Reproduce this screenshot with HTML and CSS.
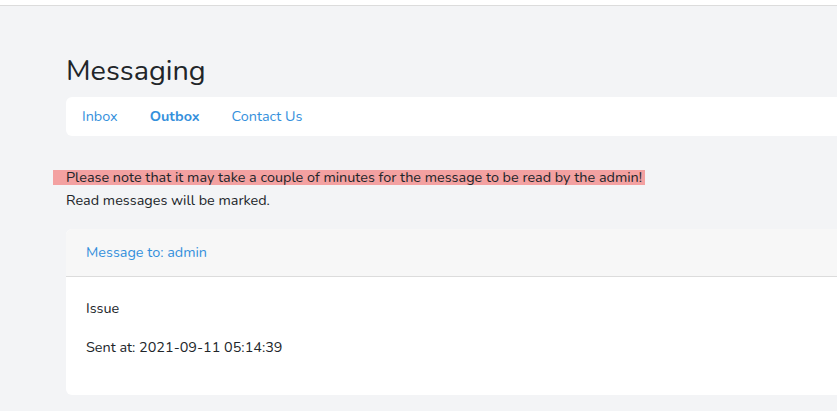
FILE: index.html
```html
<!DOCTYPE html>
<html>
<head>
<meta charset="utf-8">
<link rel="stylesheet" href="styles.css">
</head>
<body>
<div class="topbar"></div>
<main class="container">
  <h2 class="title">Messaging</h2>
  <nav class="tabs">
    <a class="tab" href="#">Inbox</a>
    <a class="tab active" href="#">Outbox</a>
    <a class="tab" href="#">Contact Us</a>
  </nav>
  <div class="notice">
    <div class="warn">Please note that it may take a couple of minutes for the message to be read by the admin!</div>
    <div>Read messages will be marked.</div>
  </div>
  <section class="card">
    <header class="card-header"><a href="#">Message to: admin</a></header>
    <div class="card-body">
      <p>Issue</p>
      <p>Sent at: 2021-09-11 05:14:39</p>
    </div>
  </section>
</main>
</body>
</html>
```
FILE: styles.css
```css
html, body {
  margin: 0;
  padding: 0;
}
body {
  background: #f3f4f6;
  font-family: "Nunito", Lato, "Noto Sans", sans-serif;
  font-size: 14.4px;
  line-height: 1.6;
  color: #212529;
  overflow: hidden;
  width: 837px;
  height: 411px;
}
a {
  color: #3490dc;
  text-decoration: none;
}
.topbar {
  height: 5px;
  background: #fff;
  border-bottom: 1px solid #dcdcdc;
}
.container {
  margin-left: 66px;
  width: 1000px;
  padding-top: 48px;
}
.title {
  margin: 0 0 8px;
  font-size: 28.8px;
  font-weight: 400;
  line-height: 1.2;
}
.tabs {
  display: flex;
  background: #fff;
  border-radius: 6px;
}
.tab {
  padding: 8px 16px;
  line-height: 23px;
}
.tab.active {
  font-weight: 700;
}
.notice {
  margin-top: 30px;
  line-height: 23px;
}
.warn {
  width: fit-content;
  margin-left: -13px;
  padding: 0 3px 0 13px;
  background: linear-gradient(to bottom, transparent 4px, #f3a1a1 4px, #f3a1a1 19px, transparent 19px);
}
.card {
  margin-top: 17px;
  background: #fff;
  border-radius: 6px;
  overflow: hidden;
}
.card-header {
  padding: 12px 20px;
  line-height: 23px;
  background: #f7f7f7;
  border-bottom: 1px solid #dcdcdc;
}
.card-body {
  padding: 20px;
}
.card-body p {
  margin: 0 0 16px;
  line-height: 23px;
}
```
